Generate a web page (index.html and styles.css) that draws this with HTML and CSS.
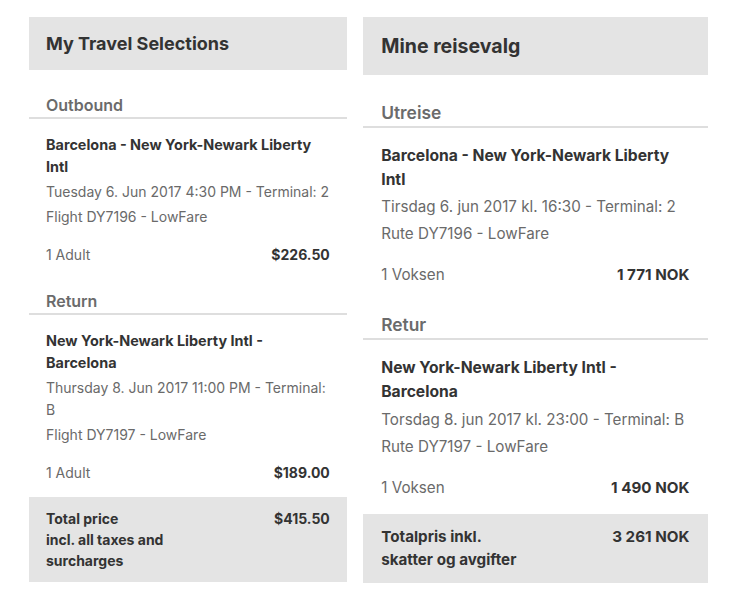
FILE: index.html
```html
<!DOCTYPE html>
<html lang="en">
<head>
  <meta charset="UTF-8" />
  <meta name="viewport" content="width=device-width, initial-scale=1.0" />
  <title>Travel Selections</title>
  <link rel="stylesheet" href="styles.css">
</head>
<body>
  <div class="page">
    <div class="panel panel-en">
      <div class="panel-header">
        <h2 class="panel-title">My Travel Selections</h2>
      </div>
      <h3 class="section-title">Outbound</h3>
      <div class="leg">
        <div class="route">Barcelona - New York-Newark Liberty Intl</div>
        <p class="info">Tuesday 6. Jun 2017 4:30 PM - Terminal: 2</p>
        <p class="info">Flight DY7196 - LowFare</p>
        <div class="price-row">
          <span>1 Adult</span>
          <span class="price">$226.50</span>
        </div>
      </div>
      <h3 class="section-title">Return</h3>
      <div class="leg">
        <div class="route">New York-Newark Liberty Intl - Barcelona</div>
        <p class="info">Thursday 8. Jun 2017 11:00 PM - Terminal: B</p>
        <p class="info">Flight DY7197 - LowFare</p>
        <div class="price-row">
          <span>1 Adult</span>
          <span class="price">$189.00</span>
        </div>
      </div>
      <div class="total">
        <div class="total-label">Total price<br>incl. all taxes and surcharges</div>
        <div class="price">$415.50</div>
      </div>
    </div>
    <div class="panel panel-no" lang="nb">
      <div class="panel-header">
        <h2 class="panel-title">Mine reisevalg</h2>
      </div>
      <h3 class="section-title">Utreise</h3>
      <div class="leg">
        <div class="route">Barcelona - New York-Newark Liberty Intl</div>
        <p class="info">Tirsdag 6. jun 2017 kl. 16:30 - Terminal: 2</p>
        <p class="info">Rute DY7196 - LowFare</p>
        <div class="price-row">
          <span>1 Voksen</span>
          <span class="price">1 771 NOK</span>
        </div>
      </div>
      <h3 class="section-title">Retur</h3>
      <div class="leg">
        <div class="route">New York-Newark Liberty Intl - Barcelona</div>
        <p class="info">Torsdag 8. jun 2017 kl. 23:00 - Terminal: B</p>
        <p class="info">Rute DY7197 - LowFare</p>
        <div class="price-row">
          <span>1 Voksen</span>
          <span class="price">1 490 NOK</span>
        </div>
      </div>
      <div class="total">
        <div class="total-label">Totalpris inkl.<br>skatter og avgifter</div>
        <div class="price">3 261 NOK</div>
      </div>
    </div>
  </div>
</body>
</html>
```

FILE: styles.css
```css
body {
  margin: 0;
  padding: 0;
  background: #fff;
  font-family: Inter, "Liberation Sans", sans-serif;
  color: #6a6a6a;
}
.page {
  display: flex;
  align-items: flex-start;
  gap: 16px;
  padding: 17px 0 0 29px;
}
.panel {
  width: 22.7em;
}
.panel-en {
  font-size: 14px;
}
.panel-no {
  font-size: 15.2px;
}
.panel-header {
  background: #e4e4e4;
  height: 3.786em;
  display: flex;
  align-items: center;
  padding: 0 1.214em;
}
.panel-title {
  margin: 0;
  font-size: 1.286em;
  font-weight: 700;
  color: #333;
}
.section-title {
  margin: 1.5em 0 0;
  padding: 0 1.06em 0.06em;
  font-size: 1.143em;
  line-height: 1.375;
  font-weight: 600;
  color: #6b6b6b;
  border-bottom: 2px solid #dedede;
}
.leg {
  padding: 1.07em 1.214em 0;
  line-height: 1.571;
}
.route {
  font-size: 1.03em;
  line-height: 1.525;
  font-weight: 700;
  color: #333;
}
.info {
  margin: 0.22em 0 0;
}
.price-row {
  display: flex;
  justify-content: space-between;
  margin-top: 1.143em;
}
.price {
  font-weight: 700;
  color: #333;
}
.total {
  display: flex;
  justify-content: space-between;
  align-items: flex-start;
  margin-top: 0.93em;
  padding: 0.786em 1.214em;
  background: #e4e4e4;
  line-height: 1.5;
}
.total-label {
  max-width: 55%;
  font-weight: 700;
  color: #333;
}
```
